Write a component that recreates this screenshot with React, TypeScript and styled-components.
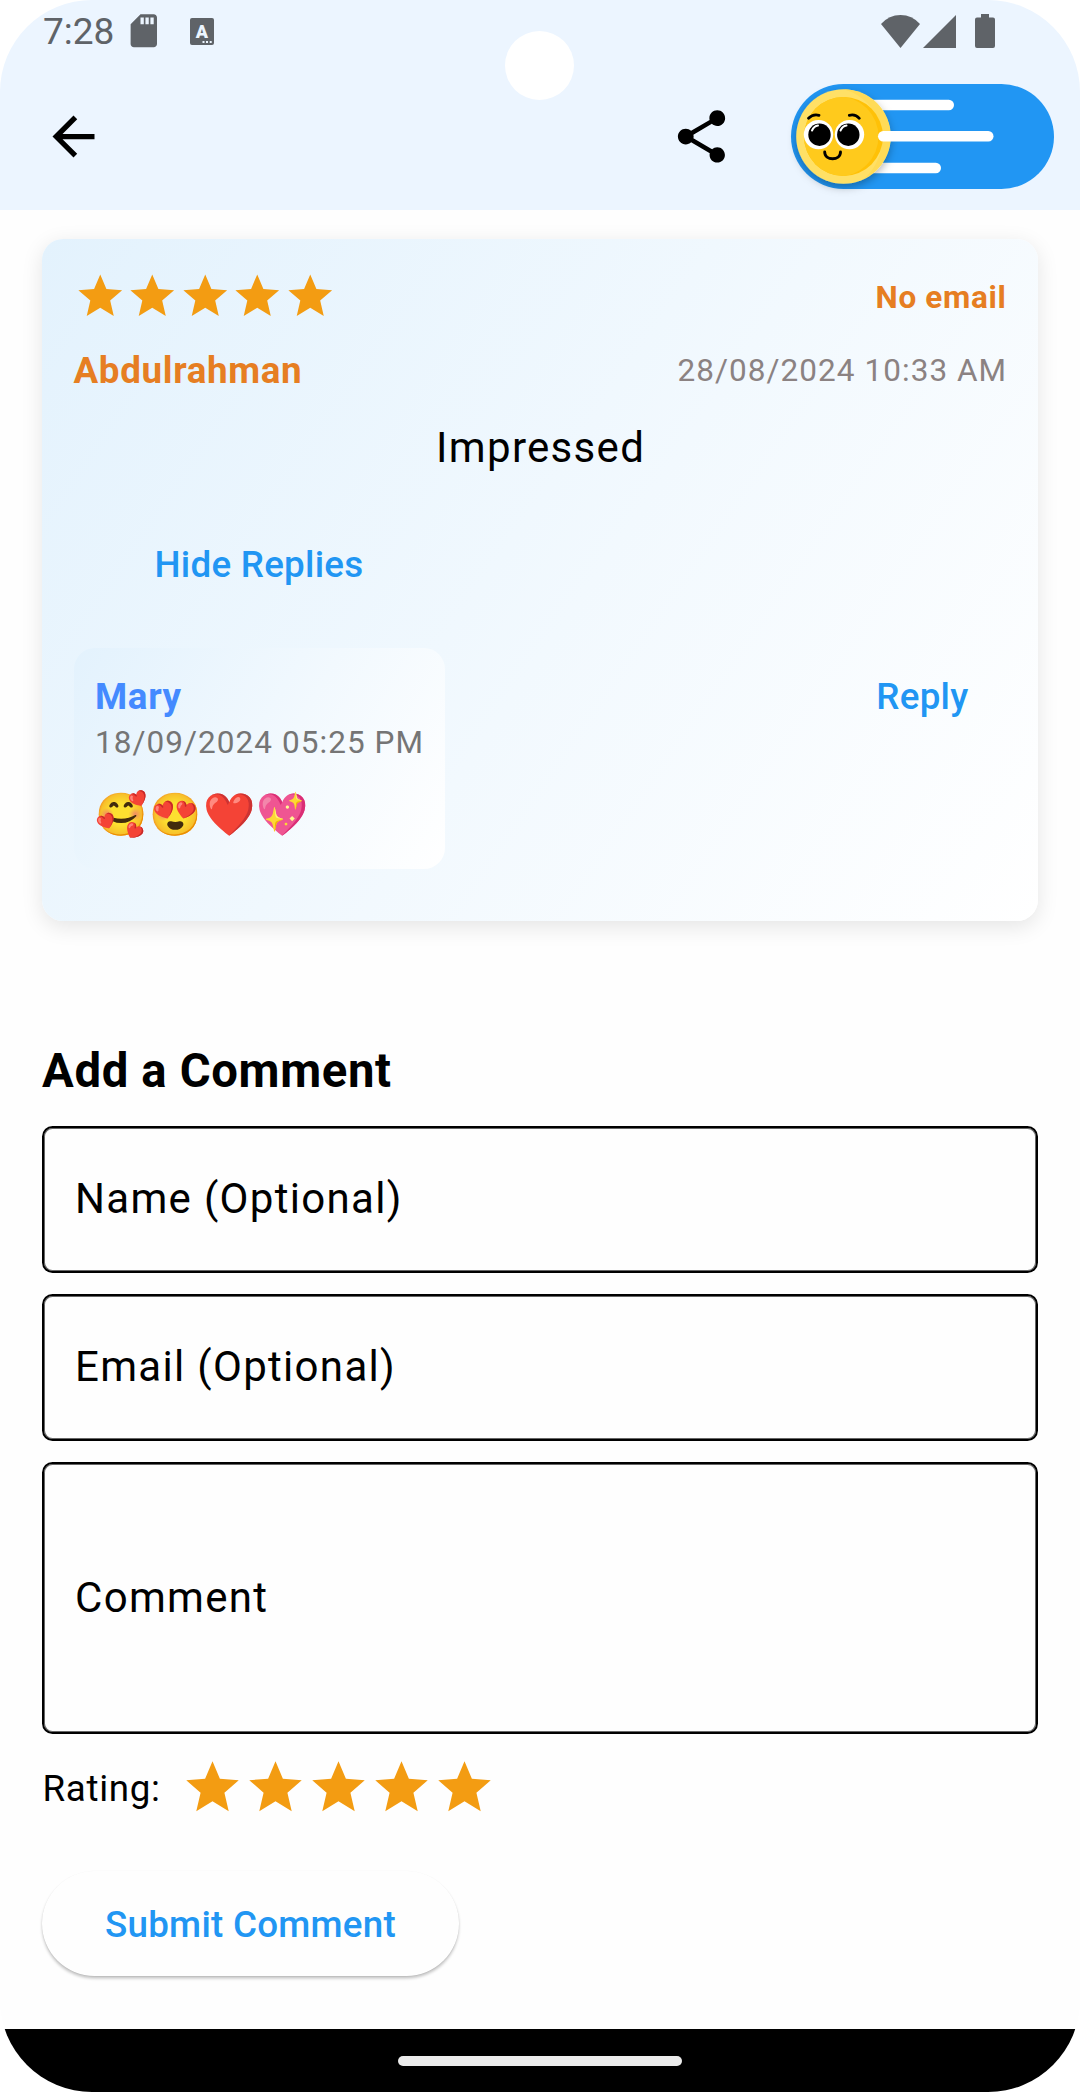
import React from "react";
import styled, { createGlobalStyle } from "styled-components";

const GlobalStyle = createGlobalStyle`
  * { box-sizing: border-box; }
  body { margin: 0; background: #fff; }
  button { font: inherit; border: 0; padding: 0; background: none; }
`;

const Screen = styled.div`
  position: relative;
  display: flex;
  flex-direction: column;
  width: 1080px;
  height: 2092px;
  overflow: hidden;
  border-radius: 92px;
  background: #fefefe;
  color: #000;
  font-family: Roboto, "Liberation Sans", "Noto Color Emoji", sans-serif;
`;

const Header = styled.header`
  flex: none;
  height: 209.6px;
  background: #ecf5ff;
`;

const CameraHole = styled.div`
  position: absolute;
  left: 504.5px;
  top: 31px;
  width: 69px;
  height: 69px;
  border-radius: 50%;
  background: #fff;
`;

const StatusBar = styled.div`
  display: flex;
  align-items: center;
  height: 62px;
  padding: 0 85.5px 0 43px;
  color: #5f6368;
`;

const Clock = styled.span`
  width: 81px;
  padding-top: 2px;
  font-size: 37px;
  line-height: 40px;
`;

const StatusSpacer = styled.span`
  flex: 1;
`;

const StatusIcon = styled.svg<{ $gap?: number }>`
  flex: none;
  display: block;
  margin-left: ${(p) => p.$gap ?? 0}px;
  fill: currentColor;
`;

const AppBar = styled.div`
  display: flex;
  align-items: center;
  height: 105px;
  margin-top: 22px;
  padding: 0 26px 0 42px;
`;

const IconButton = styled.button<{ $push?: boolean }>`
  display: block;
  width: 63px;
  height: 63px;
  margin-left: ${(p) => (p.$push ? "auto" : "0")};
  color: #000;
`;

const Glyph = styled.svg`
  display: block;
  fill: currentColor;
`;

const ThemeToggle = styled.svg`
  display: block;
  flex: none;
  margin-left: 58px;
  overflow: visible;
`;

const Main = styled.main`
  display: flex;
  flex-direction: column;
  flex: 1;
  padding: 29.2px 42px 0;
`;

const CommentCard = styled.article`
  display: flex;
  flex-direction: column;
  height: 682.3px;
  padding: 31.5px;
  border-radius: 21px;
  background: linear-gradient(124.4deg, #e3f2fd, #fff);
  box-shadow: 0 5.25px 21px rgba(0, 0, 0, 0.1);
`;

const CardRow = styled.div<{ $h: number; $mt?: number; $center?: boolean }>`
  display: flex;
  align-items: center;
  justify-content: ${(p) => (p.$center ? "center" : "space-between")};
  height: ${(p) => p.$h}px;
  margin-top: ${(p) => p.$mt ?? 0}px;
`;

const Stars = styled.div`
  display: flex;
  color: #f39c12;
`;

const Email = styled.span`
  padding-top: 2px;
  color: #e67e22;
  font-size: 31.5px;
  font-weight: 700;
  letter-spacing: 0.66px;
`;

const Author = styled.span`
  color: #e67e22;
  font-size: 36.75px;
  font-weight: 700;
  letter-spacing: 0.66px;
`;

const Timestamp = styled.time<{ $reply?: boolean }>`
  color: ${(p) => (p.$reply ? "#757575" : "#8b8282")};
  font-size: 31.5px;
  line-height: 48px;
  letter-spacing: 1.05px;
  white-space: nowrap;
  margin-right: ${(p) => (p.$reply ? "0" : "-0.7px")};
`;

const Body = styled.p`
  margin: 0;
  padding-left: 1.3px;
  font-size: 42px;
  letter-spacing: 1.31px;
`;

const TextButton = styled.button<{ $h: number; $ml?: number; $mr?: number }>`
  height: ${(p) => p.$h}px;
  margin-left: ${(p) => p.$ml ?? 0}px;
  margin-right: ${(p) => p.$mr ?? 0}px;
  color: #2196f3;
  font-size: 36.75px;
  font-weight: 500;
  letter-spacing: 0.26px;
`;

const Replies = styled.div`
  display: flex;
  align-items: flex-start;
  justify-content: space-between;
  margin-top: 20px;
`;

const ReplyBubble = styled.div`
  display: flex;
  flex-direction: column;
  height: 221px;
  padding: 27px 20.5px 0 21.5px;
  border-radius: 21px;
  background: linear-gradient(120.8deg, #e3f2fd, #fff);
`;

const ReplyAuthor = styled.span`
  color: #448aff;
  font-size: 36.75px;
  font-weight: 700;
  line-height: 43px;
  letter-spacing: 0.66px;
  margin-bottom: 1px;
`;

const ReplyText = styled.p`
  margin: 23px 0 0 0.8px;
  font-size: 42px;
  line-height: 50px;
  letter-spacing: 1.31px;
`;

const Title = styled.h2`
  margin: 122px 0 0;
  height: 56px;
  font-size: 47.25px;
  line-height: 56px;
  font-weight: 700;
  letter-spacing: 0.66px;
`;

const Fields = styled.div`
  display: flex;
  flex-direction: column;
  gap: 21.5px;
  margin-top: 27px;
`;

const Field = styled.label<{ $h: number }>`
  display: flex;
  align-items: center;
  height: ${(p) => p.$h}px;
  padding: 0 0 2px 31px;
  border: 2px solid #000;
  border-radius: 10.5px;
  box-shadow: inset 0 0 0 1px #666;
  font-size: 42px;
  letter-spacing: 1.31px;
`;

const RatingRow = styled.div`
  display: flex;
  align-items: center;
  height: 63px;
  margin-top: 21.7px;
`;

const RatingLabel = styled.span`
  width: 139.4px;
  padding: 1.5px 0 0 0.5px;
  font-size: 36.75px;
  letter-spacing: 0.66px;
`;

const SubmitButton = styled.button`
  align-self: flex-start;
  flex: none;
  width: 417px;
  height: 105px;
  margin-top: 52.3px;
  padding-top: 1px;
  border-radius: 53px;
  background: #fefefe;
  box-shadow: 0 2.6px 3px rgba(0, 0, 0, 0.22), 0 0.5px 1px rgba(0, 0, 0, 0.1);
  color: #2196f3;
  font-size: 36.75px;
  font-weight: 500;
  letter-spacing: 0.26px;
`;

const NavBar = styled.footer`
  display: flex;
  flex: none;
  align-items: center;
  justify-content: center;
  height: 63px;
  background: #000;
`;

const NavHandle = styled.div`
  width: 284px;
  height: 10px;
  border-radius: 5px;
  background: #ebebeb;
`;

function StarRow({ size }: { size: number }) {
  return (
    <Stars>
      {[0, 1, 2, 3, 4].map((i) => (
        <Glyph key={i} width={size} height={size} viewBox="0 0 24 24">
          <path d="M12 17.27 18.18 21l-1.64-7.03L22 9.24l-7.19-.61L12 2 9.19 8.63 2 9.24l5.46 4.73L5.82 21z" />
        </Glyph>
      ))}
    </Stars>
  );
}

function FaceToggle() {
  return (
    <ThemeToggle width="263" height="105" viewBox="0 0 263 105">
      <defs>
        <filter id="knob" x="-30%" y="-30%" width="160%" height="160%">
          <feDropShadow dx="0" dy="3.500" stdDeviation="4" floodColor="#000" floodOpacity="0.3" />
        </filter>
        <clipPath id="coin">
          <circle cx="52.5" cy="52.5" r="39.5" />
        </clipPath>
      </defs>
      <rect width="263" height="105" rx="52.5" fill="#2196f3" />
      <rect x="60" y="15.7" width="103" height="10.5" rx="5.2" fill="#fff" />
      <rect x="60" y="78.7" width="90" height="10.5" rx="5.2" fill="#fff" />
      <circle cx="52.5" cy="52.5" r="47.3" fill="#ffe066" filter="url(#knob)" />
      <path d="M52.500 5.200A47.300 47.300 0 0 1 72 95.500A52 52 0 0 0 52.500 5.200" fill="#ffdb57" />
      <circle cx="52.500" cy="52.500" r="39.500" fill="#ffc107" />
      <circle cx="47.500" cy="52.500" r="40" fill="#ffca1c" clipPath="url(#coin)" />
      <g fill="#fff">
        <circle cx="27.500" cy="50.600" r="14.700" />
        <circle cx="58.500" cy="50.600" r="14.700" />
      </g>
      <circle cx="28.500" cy="50.700" r="11.200" />
      <circle cx="57.300" cy="50.700" r="11.200" />
      <g fill="none" strokeLinecap="round">
        <path d="M21 46.500q2-4.500 6-5M49.500 46.500q2-4.500 6-5" stroke="#fff" strokeWidth="2" />
        <path d="M17.500 34.300q4.500-4.600 10.500-3M58.300 31.300q6-1.600 10 3" stroke="#000" strokeWidth="2.800" />
        <path d="M33.700 68c0 9 15.800 9 15.800 0" stroke="#000" strokeWidth="2.900" />
      </g>
      <rect x="87" y="47" width="115.500" height="10.500" rx="5.200" fill="#fff" />
    </ThemeToggle>
  );
}

export default function App() {
  return (
    <>
      <GlobalStyle />
      <Screen>
        <Header>
          <StatusBar>
            <Clock>7:28</Clock>
            <StatusIcon width="39.6" height="39.6" viewBox="0 0 24 24">
              <path d="M18 2h-8L4.020 8 4 20c0 1.100.9 2 2 2h12c1.100 0 2-.9 2-2V4c0-1.100-.9-2-2-2zm-6 6h-2V4h2v4zm3 0h-2V4h2v4zm3 0h-2V4h2v4z" />
            </StatusIcon>
            <StatusIcon $gap={26.4} width="24" height="27" viewBox="0 0 24 27">
              <rect width="24" height="27" rx="2" />
              <text x="12" y="20" textAnchor="middle" fontFamily="Roboto" fontWeight="900" fontSize="18" fill="#ecf5ff">A</text>
              <path d="M12.500 23h2v2h-2zM16 23h2v2h-2zM19.700 23h2v2h-2z" fill="#ecf5ff" />
            </StatusIcon>
            <StatusSpacer />
            <StatusIcon width="39" height="33" viewBox="0 0 39 33">
              <path d="M0 9Q8 0 19.500 0T39 9L19.500 33z" />
            </StatusIcon>
            <StatusIcon $gap={3} width="33" height="33" viewBox="0 0 33 33">
              <path d="M0 33 33 0v33z" />
            </StatusIcon>
            <StatusIcon $gap={19} width="20" height="34" viewBox="0 0 20 34">
              <path d="M6 0h8v3.400h4a2 2 0 0 1 2 2V32a2 2 0 0 1-2 2H2a2 2 0 0 1-2-2V5.400a2 2 0 0 1 2-2h4z" />
            </StatusIcon>
          </StatusBar>
          <AppBar>
            <IconButton aria-label="Back">
              <Glyph width="63" height="63" viewBox="0 0 24 24">
                <path d="M20 11H7.830l5.590-5.590L12 4l-8 8 8 8 1.410-1.410L7.830 13H20v-2z" />
              </Glyph>
            </IconButton>
            <IconButton aria-label="Share" $push>
              <Glyph width="63" height="63" viewBox="0 0 24 24">
                <path d="M18 16.080c-.76 0-1.440.3-1.960.77L8.910 12.700c.05-.23.09-.46.09-.7s-.04-.47-.09-.7l7.050-4.110c.54.5 1.250.81 2.040.81 1.660 0 3-1.340 3-3s-1.340-3-3-3-3 1.340-3 3c0 .24.04.47.09.7L8.040 9.810C7.500 9.310 6.790 9 6 9c-1.660 0-3 1.340-3 3s1.340 3 3 3c.79 0 1.500-.31 2.040-.81l7.120 4.160c-.05.21-.08.43-.08.65 0 1.610 1.310 2.920 2.920 2.920s2.920-1.310 2.920-2.920-1.310-2.920-2.920-2.920z" />
              </Glyph>
            </IconButton>
            <FaceToggle />
          </AppBar>
        </Header>
        <CameraHole />
        <Main>
          <CommentCard>
            <CardRow $h={52.5}>
              <StarRow size={52.5} />
              <Email>No email</Email>
            </CardRow>
            <CardRow $h={52} $mt={22}>
              <Author>Abdulrahman</Author>
              <Timestamp>28/08/2024 10:33 AM</Timestamp>
            </CardRow>
            <CardRow $h={50} $mt={25.5} $center>
              <Body>Impressed</Body>
            </CardRow>
            <CardRow $h={126} $mt={29.5}>
              <TextButton $h={126} $ml={81}>Hide Replies</TextButton>
            </CardRow>
            <Replies>
              <ReplyBubble>
                <ReplyAuthor>Mary</ReplyAuthor>
                <Timestamp $reply>18/09/2024 05:25 PM</Timestamp>
                <ReplyText>🥰😍❤️💖</ReplyText>
              </ReplyBubble>
              <TextButton $h={97} $mr={38}>Reply</TextButton>
            </Replies>
          </CommentCard>
          <Title>Add a Comment</Title>
          <Fields>
            <Field $h={146.5}>Name (Optional)</Field>
            <Field $h={146.5}>Email (Optional)</Field>
            <Field $h={272.4}>Comment</Field>
          </Fields>
          <RatingRow>
            <RatingLabel>Rating:</RatingLabel>
            <StarRow size={63} />
          </RatingRow>
          <SubmitButton>Submit Comment</SubmitButton>
        </Main>
        <NavBar>
          <NavHandle />
        </NavBar>
      </Screen>
    </>
  );
}
